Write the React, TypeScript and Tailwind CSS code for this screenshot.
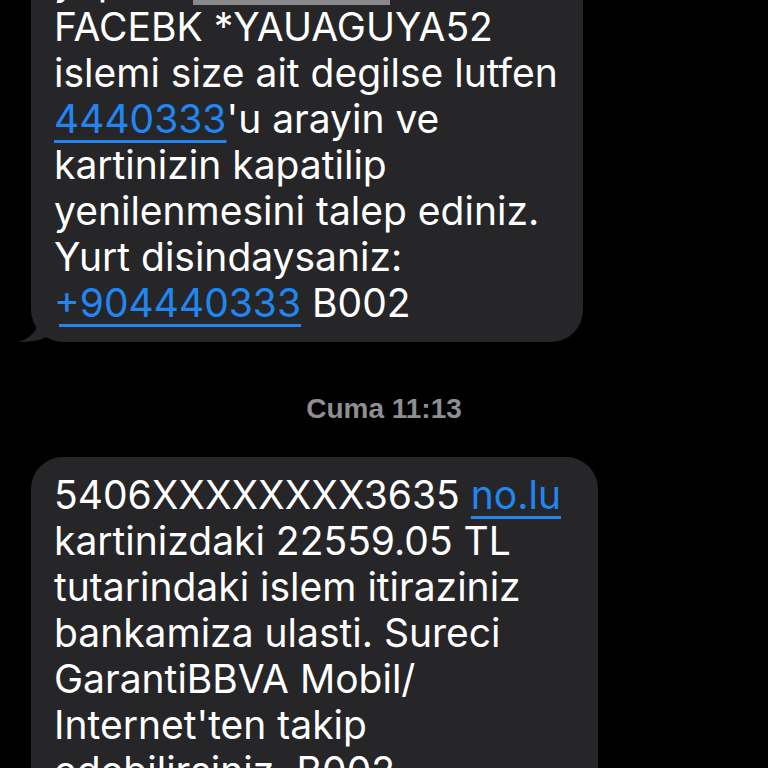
import React from "react";

const link =
  "text-[#2186f2] underline decoration-[3px] underline-offset-[7px]";

function Tail() {
  return (
    <svg
      className="absolute bottom-0 left-[-12px]"
      width="40"
      height="30"
      viewBox="0 0 40 30"
    >
      <path
        d="M20 0 C 20 16, 16 24, 0 30 C 14 30, 24 28, 32 22 L 40 30 L 40 0 Z"
        fill="#262628"
      />
    </svg>
  );
}

export default function App() {
  return (
    <div
      className="h-[768px] w-[768px] overflow-hidden bg-black text-white"
      style={{ fontFamily: "Inter, 'Liberation Sans', sans-serif" }}
    >
      <div className="relative ml-[31px] mt-[-58px] w-[552px] rounded-[32px] bg-[#262628] pb-[16px] pl-[23px] pt-[16px] text-[39px] leading-[46px]">
        <div className="relative h-[46px] whitespace-nowrap">
          yapilan{" "}
          <span className="absolute bottom-[-1px] left-[139px] h-[40px] w-[197px] bg-[#8a8a8c]" />
        </div>
        <div className="whitespace-nowrap">FACEBK *YAUAGUYA52</div>
        <div className="whitespace-nowrap">islemi size ait degilse lutfen</div>
        <div className="whitespace-nowrap">
          <span className={link}>4440333</span>'u arayin ve
        </div>
        <div className="whitespace-nowrap">kartinizin kapatilip</div>
        <div className="whitespace-nowrap">yenilenmesini talep ediniz.</div>
        <div className="whitespace-nowrap">Yurt disindaysaniz:</div>
        <div className="whitespace-nowrap">
          <span className={link}>+904440333</span> B002
        </div>
        <Tail />
      </div>

      <div
        className="mt-[51px] text-center text-[28px] font-semibold leading-[32px] text-[#8e8e93]"
        style={{ fontFamily: "'Liberation Sans', Arial, sans-serif" }}
      >
        Cuma 11:13
      </div>

      <div className="ml-[31px] mt-[32px] w-[567px] rounded-[32px] bg-[#262628] pb-[16px] pl-[23px] pt-[15px] text-[39px] leading-[46px]">
        <div className="whitespace-nowrap">
          5406XXXXXXXX3635 <span className={link}>no.lu</span>
        </div>
        <div className="whitespace-nowrap">kartinizdaki 22559.05 TL</div>
        <div className="whitespace-nowrap">tutarindaki islem itiraziniz</div>
        <div className="whitespace-nowrap">bankamiza ulasti. Sureci</div>
        <div className="whitespace-nowrap">GarantiBBVA Mobil/</div>
        <div className="whitespace-nowrap">Internet'ten takip</div>
        <div className="whitespace-nowrap">edebilirsiniz. B002</div>
      </div>
    </div>
  );
}
